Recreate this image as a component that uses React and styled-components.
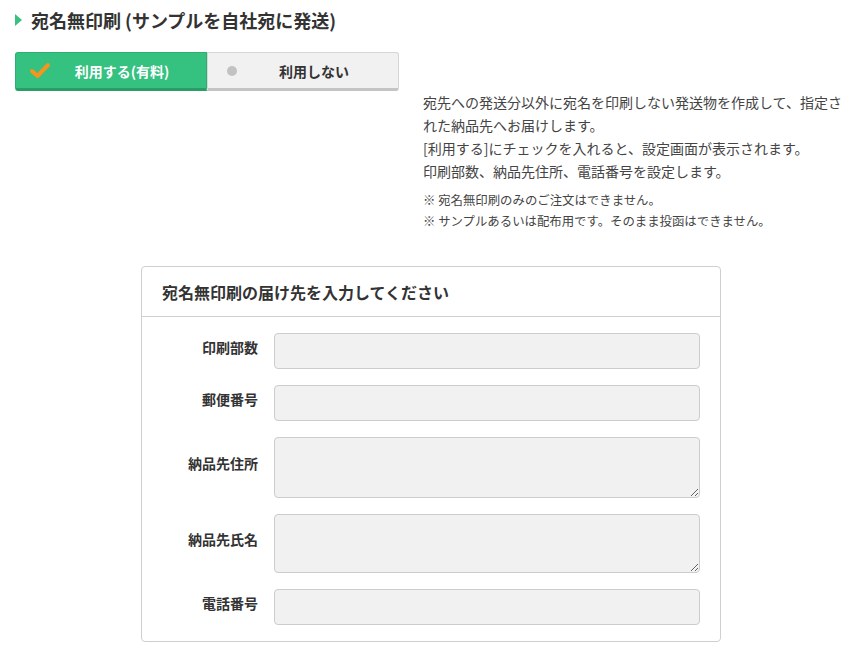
import React from "react";
import styled, { createGlobalStyle } from "styled-components";

const GlobalStyle = createGlobalStyle`
    body {
        margin: 0;
        background: #fff;
        font-family: "Noto Sans CJK JP", "Liberation Sans", sans-serif;
        color: #333;
    }
`;

const Page = styled.div`
    width: 859px;
    padding: 8px 15px 0 15px;
    box-sizing: border-box;
`;

const Title = styled.h2`
    display: flex;
    align-items: center;
    gap: 9px;
    margin: 0;
    font-size: 18px;
    font-weight: bold;
    line-height: 24px;
    color: #333;

    &::before {
        content: "";
        width: 0;
        height: 0;
        border-top: 6.5px solid transparent;
        border-bottom: 6.5px solid transparent;
        border-left: 7px solid #3cc07e;
    }
`;

const Toggle = styled.div`
    display: flex;
    width: 384px;
    margin-top: 20px;
`;

const Option = styled.div`
    flex: 1;
    height: 39px;
    box-sizing: border-box;
    display: flex;
    align-items: center;
    font-size: 14px;
    font-weight: bold;
    color: ${({ active }) => (active ? "#fff" : "#333")};
    background: ${({ active }) => (active ? "#35c180" : "#f1f1f1")};
    border: 1px solid ${({ active }) => (active ? "#2fae72" : "#d6d6d6")};
    border-bottom: 3px solid ${({ active }) => (active ? "#2a9c66" : "#c4c4c4")};
    border-radius: ${({ first }) => (first ? "3px 0 0 3px" : "0 3px 3px 0")};
`;

const OptionMark = styled.span`
    width: 44px;
    display: flex;
    justify-content: center;
    padding-left: 2px;
`;

const OptionLabel = styled.span`
    flex: 1;
    text-align: center;
    padding-right: 24px;
`;

const Dot = styled.span`
    width: 10px;
    height: 10px;
    border-radius: 50%;
    background: #c2c2c2;
`;

const Description = styled.div`
    margin: 0 0 0 408px;
    width: 424px;
`;

const Lead = styled.p`
    margin: 0;
    font-size: 14px;
    line-height: 23px;
    color: #444;
`;

const Notes = styled.p`
    margin: 7px 0 0;
    font-size: 12.4px;
    line-height: 21px;
    color: #444;
`;

const Card = styled.section`
    width: 580px;
    box-sizing: border-box;
    margin: 34px 0 0 126px;
    border: 1px solid #cfcfcf;
    border-radius: 4px;
`;

const CardHeader = styled.div`
    height: 50px;
    box-sizing: border-box;
    display: flex;
    align-items: center;
    padding: 0 20px;
    border-bottom: 1px solid #cfcfcf;
    font-size: 16px;
    font-weight: bold;
    color: #333;
`;

const Form = styled.div`
    display: grid;
    grid-template-columns: 116px 1fr;
    column-gap: 16px;
    row-gap: 16px;
    padding: 16px 20px 16px 0;
`;

const Label = styled.label`
    align-self: center;
    text-align: right;
    font-size: 14px;
    font-weight: bold;
    color: #333;
    margin-bottom: 9px;
`;

const Input = styled.input`
    display: block;
    width: 100%;
    height: 36px;
    box-sizing: border-box;
    background: #f1f1f1;
    border: 1px solid #cccccc;
    border-radius: 4px;
    margin: 0;
`;

const TextArea = styled.textarea`
    display: block;
    width: 100%;
    height: ${({ rows }) => (rows === 3 ? "61px" : "59px")};
    box-sizing: border-box;
    background: #f1f1f1;
    border: 1px solid #cccccc;
    border-radius: 4px;
    margin: 0;
    resize: vertical;
    font-family: inherit;
`;

const CheckMark = () => (
    <svg width="22" height="18" viewBox="0 0 22 18">
        <path
            d="M3 9 L8.5 14 L19 3"
            fill="none"
            stroke="#f7941d"
            strokeWidth="4"
            strokeLinecap="round"
            strokeLinejoin="round"
        />
    </svg>
);

const fields = [
    { label: "印刷部数" },
    { label: "郵便番号" },
    { label: "納品先住所", area: 3 },
    { label: "納品先氏名", area: 2 },
    { label: "電話番号" },
];

const App = () => {
    return (
        <>
            <GlobalStyle />
            <Page>
                <Title>宛名無印刷 (サンプルを自社宛に発送)</Title>
                <Toggle>
                    <Option active first>
                        <OptionMark><CheckMark /></OptionMark>
                        <OptionLabel>利用する(有料)</OptionLabel>
                    </Option>
                    <Option>
                        <OptionMark><Dot /></OptionMark>
                        <OptionLabel>利用しない</OptionLabel>
                    </Option>
                </Toggle>
                <Description>
                    <Lead>
                        宛先への発送分以外に宛名を印刷しない発送物を作成して、指定された納品先へお届けします。<br />
                        [利用する]にチェックを入れると、設定画面が表示されます。<br />
                        印刷部数、納品先住所、電話番号を設定します。
                    </Lead>
                    <Notes>
                        ※ 宛名無印刷のみのご注文はできません。<br />
                        ※ サンプルあるいは配布用です。そのまま投函はできません。
                    </Notes>
                </Description>
                <Card>
                    <CardHeader>宛名無印刷の届け先を入力してください</CardHeader>
                    <Form>
                        {fields.map((f) => (
                            <React.Fragment key={f.label}>
                                <Label>{f.label}</Label>
                                {f.area ? <TextArea rows={f.area} /> : <Input type="text" />}
                            </React.Fragment>
                        ))}
                    </Form>
                </Card>
            </Page>
        </>
    );
};

export default App;
